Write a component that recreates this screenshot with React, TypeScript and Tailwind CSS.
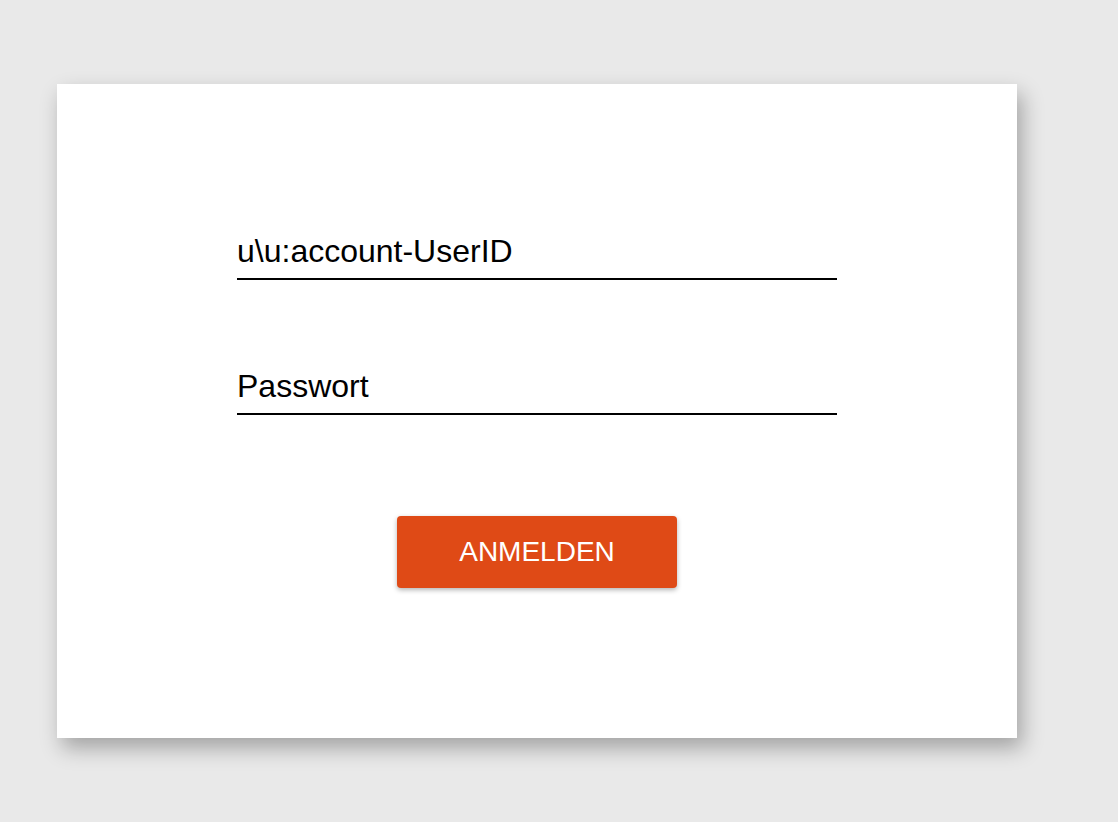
export default function App() {
  return (
    <div className="min-h-[822px] w-full bg-[#e9e9e9] pt-[84px] pl-[57px]" style={{ fontFamily: '"Liberation Sans", Arial, sans-serif' }}>
      <div className="w-[960px] h-[654px] bg-white shadow-[5px_10px_20px_rgba(0,0,0,0.3)] flex flex-col items-center pt-[149px]">
        <div className="w-[600px] flex flex-col">
          <div className="h-[36px] text-[32px] leading-[36px] text-black">u\u:account-UserID</div>
          <div className="mt-[9px] h-[2px] bg-black" />
        </div>
        <div className="w-[600px] flex flex-col mt-[88px]">
          <div className="h-[36px] text-[32px] leading-[36px] text-black">Passwort</div>
          <div className="mt-[9px] h-[2px] bg-black" />
        </div>
        <button className="mt-[101px] w-[280px] h-[72px] rounded-[4px] bg-[#df4a16] text-white text-[28px] shadow-[0_2px_5px_rgba(0,0,0,0.3)]">
          ANMELDEN
        </button>
      </div>
    </div>
  );
}
